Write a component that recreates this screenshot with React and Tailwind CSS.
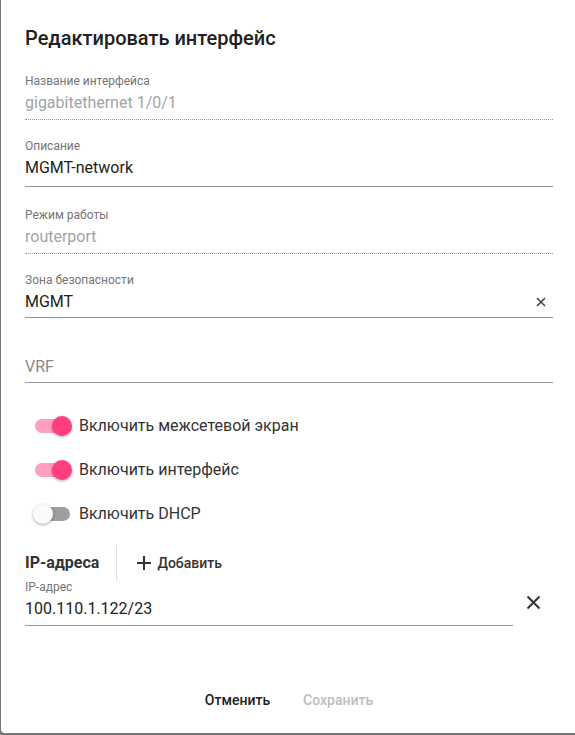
import React from 'react';

const font = { fontFamily: 'Roboto, "Noto Sans", sans-serif' };

function Field({ label, value, disabled, dotted, placeholder, clear, pb = 'pb-[6px]', className = '' }) {
  return (
    <div className={className}>
      <div className="h-4 text-xs leading-4 text-[#757575]">{label}</div>
      <div
        className={`mt-[3px] flex items-center justify-between border-b ${pb} ${
          dotted ? 'border-dotted border-[#9e9e9e]' : 'border-solid border-[#949494]'
        }`}
      >
        <span
          className={`h-[22px] text-base leading-[22px] ${
            disabled ? 'text-[#a3a3a3]' : placeholder ? 'text-[#8a8a8a]' : 'text-[#212121]'
          }`}
        >
          {value || placeholder}
        </span>
        {clear && (
          <span className="flex w-6 items-center justify-center">
            <svg width="10" height="10" viewBox="0 0 10 10">
              <path d="M1 1L9 9M9 1L1 9" stroke="#444" strokeWidth="1.6" />
            </svg>
          </span>
        )}
      </div>
    </div>
  );
}

function Toggle({ on, label }) {
  return (
    <div className="flex h-[44px] items-center">
      <div className="relative ml-[8px] h-5 w-[39px]">
        <div
          className={`absolute left-[2px] top-[3px] h-[14px] w-[35px] rounded-full ${
            on ? 'bg-[#ff9ec0]' : 'bg-[#9e9e9e]'
          }`}
        />
        <div
          className={`absolute top-0 h-5 w-5 rounded-full shadow-[0_1px_3px_rgba(0,0,0,0.35)] ${
            on ? 'left-[19px] bg-[#ff3f80]' : 'left-0 bg-[#fafafa]'
          }`}
        />
      </div>
      <span className="ml-[7px] text-base text-[#333]">{label}</span>
    </div>
  );
}

export default function App() {
  return (
    <div className="h-[735px] w-[575px] bg-[#777] pb-[2px] pl-px" style={font}>
      <div className="flex h-full flex-col rounded-bl-[4px] bg-white pl-6 pr-[22px]">
        <h1 className="mt-[26px] text-[20px] font-medium leading-6 text-[#212121]">
          Редактировать интерфейс
        </h1>

        <Field className="mt-[23px]" label="Название интерфейса" value="gigabitethernet 1/0/1" disabled dotted pb="pb-[5px]" />
        <Field className="mt-[18px]" label="Описание" value="MGMT-network" pb="pb-[7px]" />
        <Field className="mt-[20px]" label="Режим работы" value="routerport" disabled dotted pb="pb-[5px]" />
        <Field className="mt-[18px]" label="Зона безопасности" value="MGMT" clear pb="pb-[4px]" />
        <Field className="mt-[19px]" label="" placeholder="VRF" pb="pb-[4px]" />

        <div className="mt-[21px]">
          <Toggle on label="Включить межсетевой экран" />
          <Toggle on label="Включить интерфейс" />
          <Toggle label="Включить DHCP" />
        </div>

        <div className="mt-[9px] flex h-[36px] items-center">
          <div className="flex h-full items-center border-r border-[#e0e0e0] pr-[17px] text-base font-bold text-[#333]">
            IP-адреса
          </div>
          <button className="ml-[19px] flex items-center text-sm font-medium text-[#333]">
            <svg width="16" height="16" viewBox="0 0 16 16">
              <path d="M8 1V15M1 8H15" stroke="#333" strokeWidth="2" />
            </svg>
            <span className="ml-[5px]">Добавить</span>
          </button>
        </div>

        <div className="-mt-0.5 flex items-center">
          <Field className="flex-1" label="IP-адрес" value="100.110.1.122/23" pb="pb-[5px]" />
          <div className="flex w-10 items-center justify-center">
            <svg width="15" height="15" viewBox="0 0 15 15">
              <path d="M1.5 1.5L13.5 13.5M13.5 1.5L1.5 13.5" stroke="#333" strokeWidth="2" />
            </svg>
          </div>
        </div>

        <div className="mt-[56px] flex justify-center gap-px">
          <button className="h-9 px-4 text-sm font-medium text-[#212121]">Отменить</button>
          <button className="h-9 px-4 text-sm font-medium text-[#bdbdbd]">Сохранить</button>
        </div>
      </div>
    </div>
  );
}
